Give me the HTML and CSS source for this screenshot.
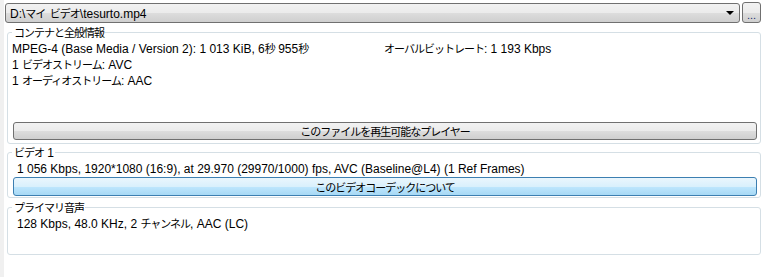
FILE: index.html
```html
<!DOCTYPE html>
<html lang="ja">
<head>
  <meta charset="UTF-8">
  <title>MediaInfo</title>
  <link rel="stylesheet" href="styles.css">
</head>
<body>
  <div class="window">
    <!-- File selector -->
    <div class="file-row">
      <div class="combo">
        <span class="combo-text">D:\<span class="jp">マイ ビデオ</span>\tesurto.mp4</span>
        <span class="combo-arrow"></span>
      </div>
      <button class="browse">...</button>
    </div>

    <!-- General -->
    <div class="group group-general">
      <span class="caption jp">コンテナと全般情報</span>
      <div class="info-row info-split">
        <span class="col-left">MPEG-4 (Base Media / Version 2): 1 013 KiB, 6<span class="jp">秒</span> 955<span class="jp">秒</span></span>
        <span><span class="jp">オーバルビットレート</span>: 1 193 Kbps</span>
      </div>
      <div class="info-row">1 <span class="jp">ビデオストリーム</span>: AVC</div>
      <div class="info-row">1 <span class="jp">オーディオストリーム</span>: AAC</div>
      <button class="btn btn-gray jp">このファイルを再生可能なプレイヤー</button>
    </div>

    <!-- Video -->
    <div class="group group-video">
      <span class="caption"><span class="jp">ビデオ</span> 1</span>
      <div class="info-row indent">1 056 Kbps, 1920*1080 (16:9), at 29.970 (29970/1000) fps, AVC (Baseline@L4) (1 Ref Frames)</div>
      <button class="btn btn-blue jp">このビデオコーデックについて</button>
    </div>

    <!-- Audio -->
    <div class="group group-audio">
      <span class="caption jp">プライマリ音声</span>
      <div class="info-row indent">128 Kbps, 48.0 KHz, 2 <span class="jp">チャンネル</span>, AAC (LC)</div>
    </div>
  </div>
</body>
</html>
```

FILE: styles.css
```css
html, body { margin: 0; padding: 0; background: #fff; }
body { font-family: "Liberation Sans", Arial, "Noto Sans CJK JP", sans-serif; font-size: 12px; color: #000; }
.jp { font-family: "Noto Sans CJK JP", sans-serif; font-size: 11px; letter-spacing: -1px; word-spacing: 3px; }
.window { min-height: 277px; box-sizing: border-box; border-left: 4px solid #f0f0f0; padding: 2px 2px 0 1px; }

.file-row { display: flex; gap: 2px; height: 21px; }
.combo { flex: 1; display: flex; align-items: center; justify-content: space-between; margin-top: 1px; height: 20px; box-sizing: border-box; border: 1px solid #707070; border-radius: 3px; background: linear-gradient(#f2f2f2 0%, #ebebeb 50%, #dddddd 51%, #cfcfcf 100%); padding: 0 4px 0 4px; }
.combo-text { line-height: 16px; }
.combo-arrow { width: 0; height: 0; border-left: 4px solid transparent; border-right: 4px solid transparent; border-top: 4px solid #000; margin-right: 1px; }
.browse { width: 19px; height: 21px; padding: 0; border: 1px solid #707070; border-radius: 3px; background: linear-gradient(#f2f2f2 0%, #ebebeb 50%, #dddddd 51%, #cfcfcf 100%); font: inherit; font-size: 11px; color: #1a3070; line-height: 14px; padding-top: 4px; }

.group { display: flex; flex-direction: column; box-sizing: border-box; margin-left: 2px; border: 1px solid #d5dfe5; border-radius: 3px; padding: 0 3px 0 4px; }
.group-general { margin-top: 9px; height: 112px; }
.group-video { margin-top: 8px; height: 46px; }
.group-audio { margin-top: 9px; height: 48px; }
.caption { align-self: flex-start; margin: -8px 0 0 0; padding: 0 1px 0 2px; background: #fff; line-height: 15px; }
.info-row { display: block; height: 16px; line-height: 16px; white-space: nowrap; }
.info-split { display: flex; align-items: baseline; }
.info-row.indent { padding-left: 5px; }
.col-left { width: 372px; }

.btn { font: inherit; color: #000; box-sizing: border-box; border-radius: 3px; padding: 0; margin: auto 0 3px 1px; line-height: 14px; }
.btn.jp { font-family: "Noto Sans CJK JP", sans-serif; font-size: 11px; letter-spacing: -1px; }
.btn-gray { height: 18px; border: 1px solid #707070; background: linear-gradient(#f2f2f2 0%, #ebebeb 50%, #dddddd 51%, #cfcfcf 100%); }
.btn-blue { height: 19px; margin-bottom: 1px; border: 1px solid #3c7fb1; background: linear-gradient(#eaf6fd 0%, #d9f0fc 50%, #bee6fd 51%, #a7d9f5 100%); }
```
